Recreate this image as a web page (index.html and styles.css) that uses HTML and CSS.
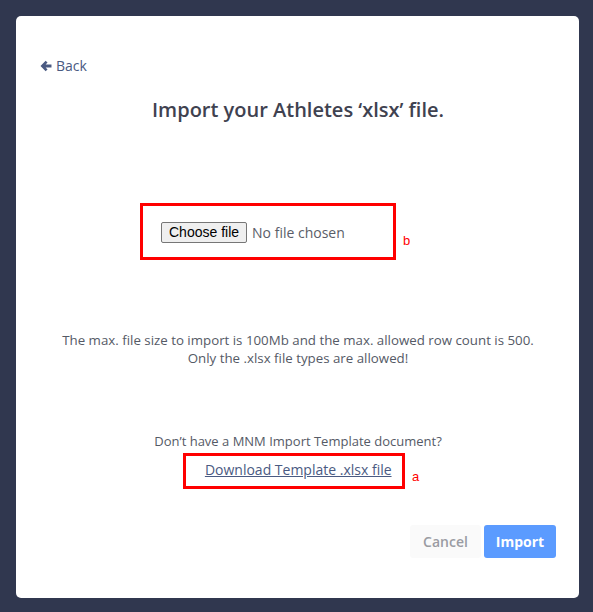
FILE: index.html
```html
<!DOCTYPE html>
<html lang="en">
<head>
  <meta charset="UTF-8">
  <meta name="viewport" content="width=device-width, initial-scale=1.0">
  <link rel="stylesheet" href="styles.css">
  <title>Import Athletes</title>
</head>
<body>
  <div class="modal">
    <a class="back-link" href="#">
      <svg class="back-icon" viewBox="0 0 14 14" width="12" height="12">
        <path d="M6.6 0.8 L8.8 3 L6.6 5.3 H13.4 V8.7 H6.6 L8.8 11 L6.6 13.2 L0.6 7 Z" fill="#4a5a82"/>
      </svg>
      Back
    </a>

    <h1 class="title">Import your Athletes ‘xlsx’ file.</h1>

    <div class="upload-row">
      <div class="mark-box upload-box">
        <span class="file-input">
          <span class="file-button">Choose file</span>
          <span class="file-name">No file chosen</span>
        </span>
      </div>
      <span class="mark-label label-b">b</span>
    </div>

    <p class="hint">
      The max. file size to import is 100Mb and the max. allowed row count is 500.<br>
      Only the .xlsx file types are allowed!
    </p>

    <p class="template-text">Don’t have a MNM Import Template document?</p>

    <div class="template-row">
      <div class="mark-box template-box">
        <a class="template-link" href="#">Download Template .xlsx file</a>
      </div>
      <span class="mark-label label-a">a</span>
    </div>

    <div class="actions">
      <button class="btn btn-cancel">Cancel</button>
      <button class="btn btn-import">Import</button>
    </div>
  </div>
</body>
</html>
```

FILE: styles.css
```css
html,
body {
  margin: 0;
  height: 100%;
}

body {
  background-color: #30374f;
  font-family: "Open Sans", "Noto Sans", sans-serif;
  padding: 16px 14px 14px 16px;
  box-sizing: border-box;
}

.modal {
  background-color: #fff;
  border-radius: 5px;
  width: 563px;
  height: 582px;
  box-sizing: border-box;
  padding: 39px 23px 40px 24px;
}

.back-link {
  display: inline-flex;
  align-items: center;
  gap: 4px;
  color: #4a5a82;
  font-size: 14px;
  line-height: 20px;
  text-decoration: none;
}

.title {
  margin: 19px 0 0;
  text-align: center;
  font-size: 20px;
  line-height: 28px;
  font-weight: 600;
  color: #3f4250;
}

.upload-row {
  display: flex;
  align-items: flex-start;
  margin: 79px 0 0 100px;
}

.mark-box {
  border: 3px solid #f00;
  box-sizing: border-box;
}

.upload-box {
  width: 256px;
  height: 57px;
  display: flex;
  align-items: center;
  padding-left: 18px;
}

.file-input {
  display: flex;
  align-items: center;
  gap: 5px;
}

.file-button {
  font-family: "Liberation Sans", Arial, sans-serif;
  font-size: 14px;
  color: #000;
  background-color: #efefef;
  border: 1px solid #767676;
  border-radius: 2px;
  padding: 1px 7px;
  line-height: 17px;
  margin-top: 1px;
}

.file-name {
  font-size: 14px;
  color: #5a5d68;
  margin-top: 1px;
}

.mark-label {
  color: #f00;
  font-size: 13px;
  font-family: "Liberation Sans", Arial, sans-serif;
}

.label-b {
  margin: 30px 0 0 7px;
}

.hint {
  margin: 71px 0 0;
  text-align: center;
  font-size: 13.3px;
  line-height: 18px;
  color: #555a66;
}

.template-text {
  margin: 65px 0 0;
  text-align: center;
  font-size: 13px;
  line-height: 18px;
  color: #555a66;
}

.template-row {
  display: flex;
  justify-content: center;
  align-items: flex-start;
  margin: 3px 0 0 6px;
}

.template-box {
  width: 222px;
  height: 36px;
  padding: 2px 0 0 19px;
}

.template-link {
  color: #4a5a82;
  font-size: 14px;
  line-height: 20px;
}

.label-a {
  margin: 16px 0 0 7px;
}

.actions {
  display: flex;
  justify-content: flex-end;
  gap: 3px;
  margin-top: 36px;
}

.btn {
  font-family: "Open Sans", "Noto Sans", sans-serif;
  font-size: 14px;
  font-weight: 600;
  height: 33px;
  border: none;
  border-radius: 3px;
  padding: 0;
}

.btn-cancel {
  width: 71px;
  background-color: #fafafa;
  color: #9a9ca3;
}

.btn-import {
  width: 72px;
  background-color: #5b9bff;
  color: #fff;
  font-weight: 700;
}
```
